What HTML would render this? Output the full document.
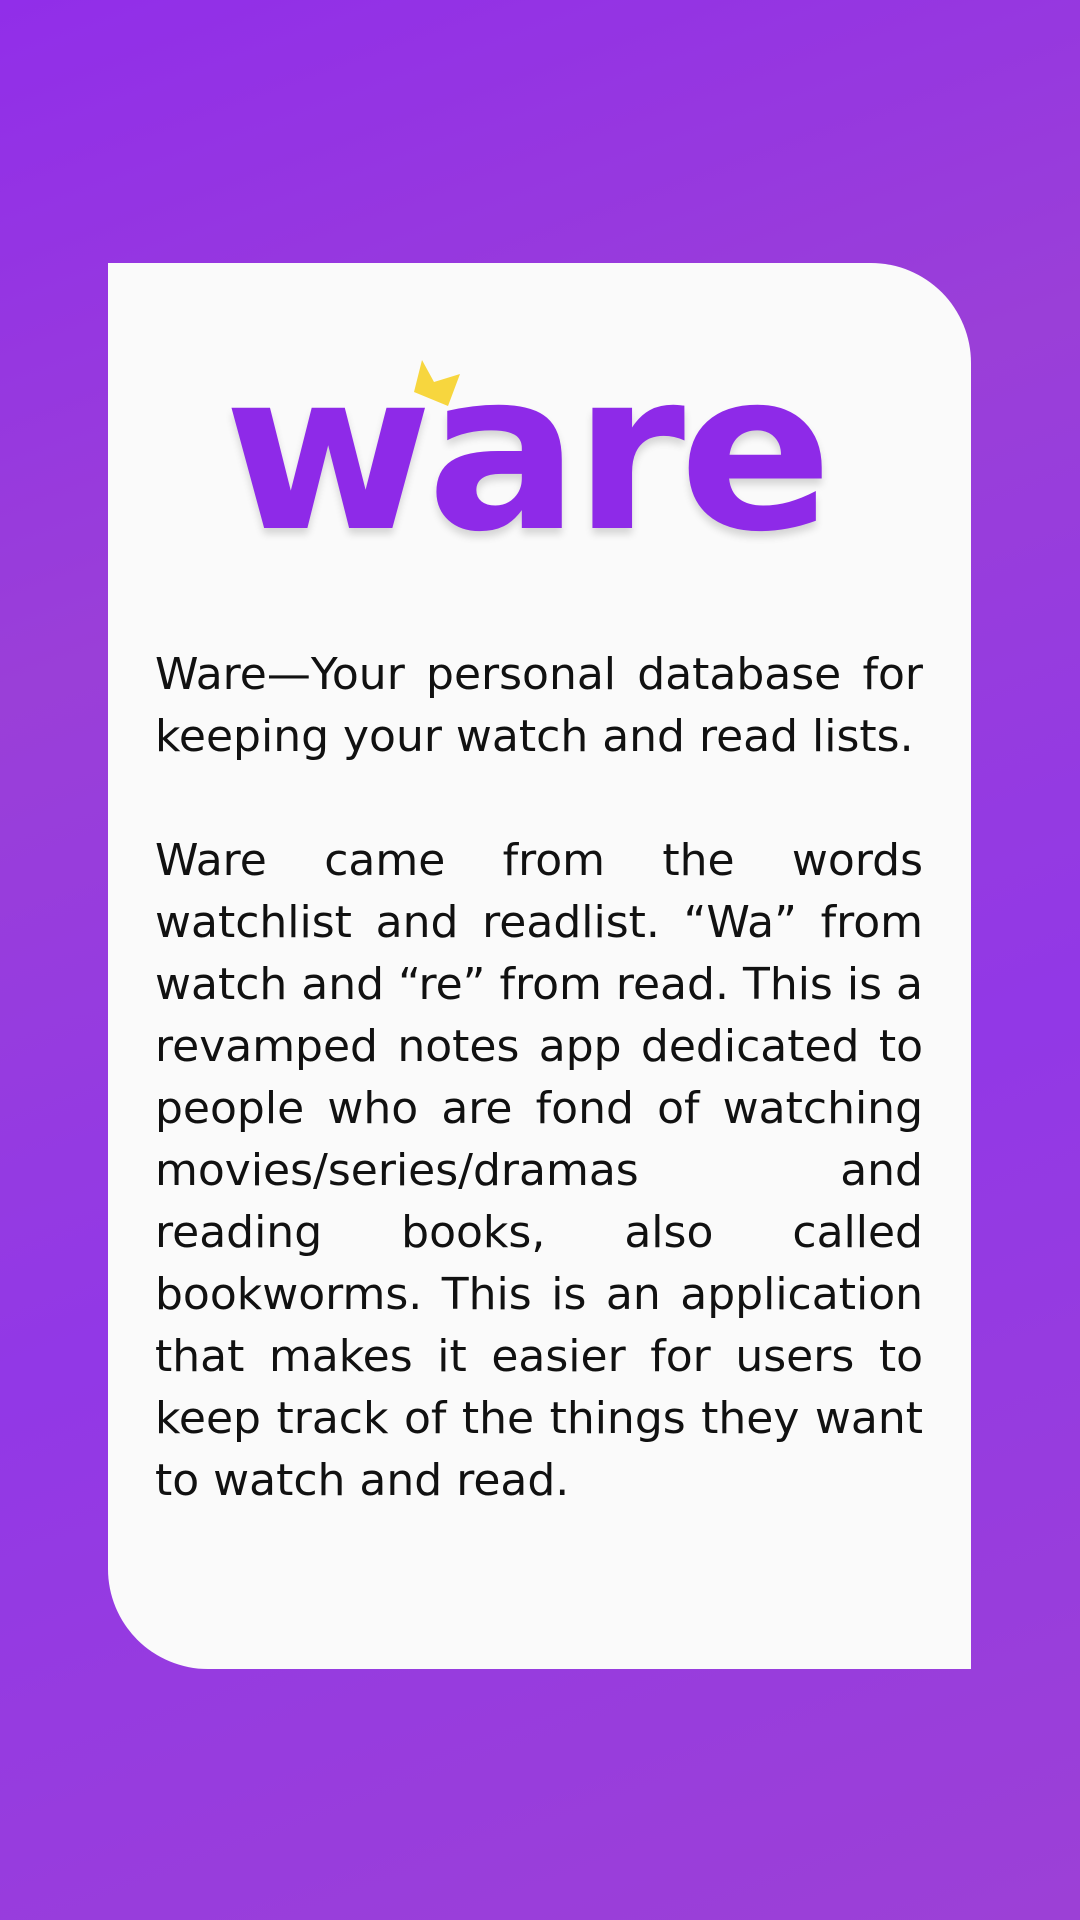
<!DOCTYPE html>
<html><head><meta charset="utf-8"><style>
html,body{margin:0;padding:0}
body{width:1080px;height:1920px;overflow:hidden;background:linear-gradient(160deg,#912ee9 0%,#9a3fd8 30%,#9238e6 60%,#9c40d6 100%);position:relative;font-family:"DejaVu Sans",sans-serif}
.card{position:absolute;left:108px;top:263px;width:863px;height:1406px;background:#fafafa;border-top-right-radius:100px;border-bottom-left-radius:100px}
.logo{position:absolute;left:175px;top:342px;width:700px;text-align:center;font-family:"DejaVu Sans",sans-serif;font-weight:bold;font-size:220px;color:#8e2ae8;line-height:1;transform:scaleX(1.03);transform-origin:center;text-shadow:0 6px 8px rgba(0,0,0,.15);letter-spacing:-6px}
.crown{position:absolute;left:414px;top:360px}
.txt{position:absolute;left:155px;width:768px;top:644px;font-size:44px;line-height:62px;color:#111}
.txt div{text-align:justify;text-align-last:justify;white-space:nowrap;height:62px}
.txt div.l{text-align-last:left}
.gap{height:62px}
</style></head><body>
<div class="card"></div>
<div class="logo">ware</div>
<svg class="crown" width="56" height="50" viewBox="0 0 56 50"><path d="M8 0 L20 22 L46 14 L34 46 L0 32 Z" fill="#f7d63e"/></svg>
<div class="txt">
<div>Ware—Your personal database for</div>
<div class="l">keeping your watch and read lists.</div>
<div class="gap"></div>
<div>Ware came from the words</div>
<div>watchlist and readlist. “Wa” from</div>
<div>watch and “re” from read. This is a</div>
<div>revamped notes app dedicated to</div>
<div>people who are fond of watching</div>
<div>movies/series/dramas and</div>
<div>reading books, also called</div>
<div>bookworms. This is an application</div>
<div>that makes it easier for users to</div>
<div>keep track of the things they want</div>
<div class="l">to watch and read.</div>
</div>
</body></html>
